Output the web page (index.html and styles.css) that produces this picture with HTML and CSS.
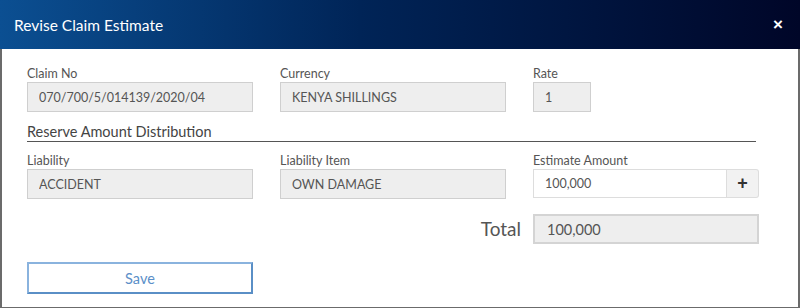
FILE: index.html
```html
<!DOCTYPE html>
<html lang="en">
<head>
  <meta charset="UTF-8">
  <title>Revise Claim Estimate</title>
  <link rel="stylesheet" href="styles.css">
</head>
<body>
  <div class="modal">
    <div class="modal-header">
      <h3>Revise Claim Estimate</h3>
      <span class="close">&times;</span>
    </div>

    <div class="modal-body">
      <div class="row">
        <div class="field">
          <label>Claim No</label>
          <input type="text" value="070/700/5/014139/2020/04" readonly>
        </div>
        <div class="field">
          <label>Currency</label>
          <input type="text" value="KENYA SHILLINGS" readonly>
        </div>
        <div class="field">
          <label>Rate</label>
          <input type="text" class="small" value="1" readonly>
        </div>
      </div>

      <h4 class="section-title">Reserve Amount Distribution</h4>

      <div class="row">
        <div class="field">
          <label>Liability</label>
          <input type="text" value="ACCIDENT" readonly>
        </div>
        <div class="field">
          <label>Liability Item</label>
          <input type="text" value="OWN DAMAGE" readonly>
        </div>
        <div class="field">
          <label>Estimate Amount</label>
          <div class="input-group">
            <input type="text" class="editable" value="100,000">
            <button class="add-btn">+</button>
          </div>
        </div>
      </div>

      <div class="row total-row">
        <div class="field"></div>
        <div class="field total-label">Total</div>
        <div class="field">
          <input type="text" class="total" value="100,000" readonly>
        </div>
      </div>

      <div class="row">
        <div class="field">
          <button class="save-btn">Save</button>
        </div>
      </div>
    </div>
  </div>
</body>
</html>
```

FILE: styles.css
```css
body {
  margin: 0;
  font-family: Lato, "Open Sans", sans-serif;
  background: #fff;
}
.modal {
  width: 800px;
  height: 308px;
  box-sizing: border-box;
  border: 2px solid #6b6b6b;
  border-top: none;
  border-bottom-width: 1px;
}
.modal-header {
  height: 49px;
  margin: 0 -2px;
  padding: 0 14px;
  display: flex;
  align-items: center;
  justify-content: space-between;
  background: linear-gradient(to right, #0b4f92 0%, #002457 45%, #000628 100%);
  color: #fff;
}
.modal-header h3 {
  margin: 0;
  font-size: 15.5px;
  font-weight: normal;
}
.close {
  font-size: 17px;
  font-weight: bold;
  margin-right: 3px;
  font-family: Arial, sans-serif;
}
.modal-body {
  padding: 16px 37px 0 25px;
}
.row {
  display: grid;
  grid-template-columns: 226px 226px 226px;
  column-gap: 27px;
}
.field label {
  display: block;
  font-size: 12.5px;
  color: #555;
  height: 17px;
  line-height: 17px;
}
.field input {
  width: 100%;
  height: 30px;
  box-sizing: border-box;
  border: 1px solid #cfcfcf;
  background: #eeeeee;
  color: #555;
  padding: 0 11px;
  font-family: inherit;
  font-size: 12.5px;
  outline: none;
}
.field input.small {
  width: 58px;
}
.section-title {
  margin: 11px 0 10px;
  font-size: 14.5px;
  font-weight: normal;
  color: #444;
  height: 18px;
  line-height: 18px;
  border-bottom: 1px solid #555;
  width: 729px;
}
.input-group {
  display: flex;
}
.input-group input.editable {
  background: #fff;
  border-color: #ddd;
  height: 29px;
}
.add-btn {
  width: 32px;
  height: 29px;
  flex-shrink: 0;
  border: 1px solid #ddd;
  border-left: none;
  background: #f2f2f2;
  border-radius: 0 3px 3px 0;
  font-size: 18px;
  font-weight: bold;
  color: #333;
  padding: 0;
  font-family: Arial, sans-serif;
}
.total-row {
  margin-top: 15px;
}
.total-label {
  text-align: right;
  font-size: 19px;
  color: #555;
  line-height: 30px;
  padding-right: 12px;
  margin-right: -27px;
}
.field input.total {
  border: 2px solid #d4d4d4;
  height: 30px;
  font-size: 14.5px;
  padding: 0 12px;
}
.save-btn {
  margin-top: 18px;
  width: 226px;
  height: 32px;
  background: #fff;
  border: 2px solid #8ab3de;
  border-right-color: #5a8fc6;
  border-bottom-color: #5a8fc6;
  color: #5b8fc8;
  font-family: inherit;
  font-size: 14.5px;
}
```
